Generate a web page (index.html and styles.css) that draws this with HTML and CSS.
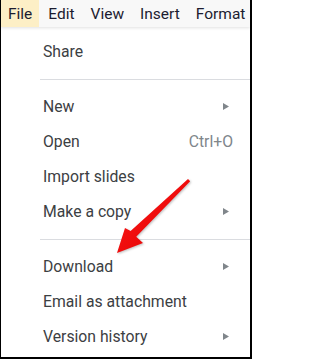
FILE: index.html
```html
<!DOCTYPE html>
<html>
<head>
<meta charset="utf-8">
<link rel="stylesheet" href="styles.css">
</head>
<body>
<div class="frame">
  <div class="menubar">
    <span class="mb-item active">File</span>
    <span class="mb-item">Edit</span>
    <span class="mb-item">View</span>
    <span class="mb-item">Insert</span>
    <span class="mb-item">Format</span>
  </div>
  <div class="menu">
    <div class="item"><span class="label">Share</span></div>
    <div class="sep"></div>
    <div class="item"><span class="label">New</span><svg class="sub" width="6" height="7" viewBox="0 0 6 7"><path d="M0 0 L6 3.5 L0 7 Z"/></svg></div>
    <div class="item"><span class="label">Open</span><span class="shortcut">Ctrl+O</span></div>
    <div class="item"><span class="label">Import slides</span></div>
    <div class="item"><span class="label">Make a copy</span><svg class="sub" width="6" height="7" viewBox="0 0 6 7"><path d="M0 0 L6 3.5 L0 7 Z"/></svg></div>
    <div class="sep"></div>
    <div class="item"><span class="label">Download</span><svg class="sub" width="6" height="7" viewBox="0 0 6 7"><path d="M0 0 L6 3.5 L0 7 Z"/></svg></div>
    <div class="item"><span class="label">Email as attachment</span></div>
    <div class="item"><span class="label">Version history</span><svg class="sub" width="6" height="7" viewBox="0 0 6 7"><path d="M0 0 L6 3.5 L0 7 Z"/></svg></div>
  </div>
  <svg class="arrow" width="252" height="359" viewBox="0 0 252 359">
    <defs>
      <linearGradient id="ag" x1="0" y1="0" x2="1" y2="1">
        <stop offset="0" stop-color="#ff1a1a"/>
        <stop offset="1" stop-color="#e00000"/>
      </linearGradient>
    </defs>
    <polygon points="188,179 190.2,181.2 136.2,236.8 143,243 117,253 125,228 130.6,231" fill="url(#ag)"/>
  </svg>
</div>
</body>
</html>
```

FILE: styles.css
```css
html, body {
  margin: 0;
  padding: 0;
  background: #fff;
}
.frame {
  position: relative;
  width: 252px;
  height: 359px;
  box-sizing: border-box;
  border-left: 1px solid #000;
  border-right: 2px solid #000;
  border-bottom: 2px solid #000;
  overflow: hidden;
  font-family: Roboto, "Liberation Sans", sans-serif;
}
.menubar {
  display: flex;
  height: 27px;
  align-items: stretch;
  background: #f8f8f8;
  box-shadow: 0 1px 3px rgba(0,0,0,0.12);
  position: relative;
  z-index: 1;
}
.mb-item {
  display: flex;
  align-items: center;
  padding: 0 7px;
  margin-right: 2px;
  font-size: 15.5px;
  color: #1c1c30;
}
.mb-item.active {
  background: #fdefc6;
}
.menu {
  padding-top: 7px;
}
.item {
  display: flex;
  align-items: center;
  height: 35px;
  padding-left: 42px;
  padding-right: 17px;
  font-size: 15.75px;
  color: #3c4043;
}
.label {
  flex: 1;
}
.shortcut {
  color: #80868b;
}
.sub {
  fill: #80868b;
  margin-right: 4px;
}
.sep {
  height: 1px;
  background: #dadce0;
  margin: 10px 0 9px 39px;
}
.arrow {
  position: absolute;
  left: -1px;
  top: 0;
  filter: drop-shadow(1px 1px 1px rgba(0,0,0,0.25));
}
```
